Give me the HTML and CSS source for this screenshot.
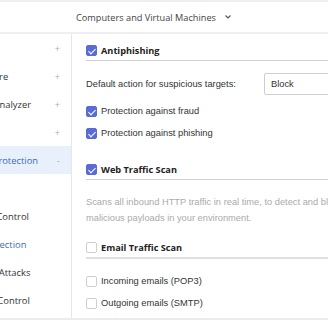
FILE: index.html
```html
<!DOCTYPE html>
<html lang="en">
<head>
  <meta charset="UTF-8" />
  <title>Policy - Network Protection</title>
  <link rel="stylesheet" href="styles.css">
</head>
<body>

  <header class="topbar">
    <span>Computers and Virtual Machines</span>
    <svg class="chevron" width="6" height="4" viewBox="0 0 6 4"><polyline points="0.5,0.5 3,3 5.5,0.5" fill="none" stroke="#555" stroke-width="1.1"/></svg>
  </header>

  <div class="layout">
    <nav class="sidebar">
      <ul class="nav">
        <li class="nav-item"><span class="nav-label">General</span><span class="nav-sign">+</span></li>
        <li class="nav-item"><span class="nav-label">Antimalware</span><span class="nav-sign">+</span></li>
        <li class="nav-item"><span class="nav-label">Sandbox Analyzer</span><span class="nav-sign">+</span></li>
        <li class="nav-item"><span class="nav-label">Firewall</span><span class="nav-sign">+</span></li>
        <li class="nav-item active"><span class="nav-label">Network Protection</span><span class="nav-sign">-</span></li>
        <li class="nav-item sub"><span class="nav-label">General</span></li>
        <li class="nav-item sub"><span class="nav-label">Content Control</span></li>
        <li class="nav-item sub current"><span class="nav-label">Web Protection</span></li>
        <li class="nav-item sub"><span class="nav-label">Network Attacks</span></li>
        <li class="nav-item tail"><span class="nav-label">Application Control</span></li>
      </ul>
    </nav>

    <main class="content">
      <section>
        <div class="section-head"><span class="check on"></span>Antiphishing</div>
        <div class="field">
          <span class="field-label">Default action for suspicious targets:</span>
          <div class="select">Block</div>
        </div>
        <div class="option first"><span class="check on"></span>Protection against fraud</div>
        <div class="option"><span class="check on"></span>Protection against phishing</div>
      </section>

      <section class="web-scan">
        <div class="section-head"><span class="check on"></span>Web Traffic Scan</div>
        <p class="desc">Scans all inbound HTTP traffic in real time, to detect and block malicious payloads in your environment.</p>
      </section>

      <section class="email-scan">
        <div class="section-head thick"><span class="check"></span>Email Traffic Scan</div>
        <div class="option first"><span class="check"></span>Incoming emails (POP3)</div>
        <div class="option"><span class="check"></span>Outgoing emails (SMTP)</div>
      </section>
    </main>
  </div>

</body>
</html>
```

FILE: styles.css
```css
* {
  box-sizing: border-box;
}

body {
  margin: 0;
  width: 328px;
  height: 320px;
  overflow: hidden;
  font-family: 'Liberation Sans', Arial, sans-serif;
  font-size: 9.3px;
  color: #333;
  background: #fff;
}

.topbar {
  height: 34px;
  border-top: 2px solid #efefef;
  border-bottom: 2px solid #efefef;
  display: flex;
  align-items: center;
  gap: 9px;
  padding-left: 76px;
  font-family: 'Open Sans', sans-serif;
  font-size: 9.2px;
  color: #444;
}

.layout {
  display: flex;
  height: 286px;
  border-bottom: 2px solid #ececec;
}

/* the tree is scrolled sideways, so labels start left of the frame */
.sidebar {
  width: 72px;
  flex: none;
  border-right: 1px solid #e6e6e6;
  overflow: hidden;
}

.nav {
  list-style: none;
  margin: 0;
  padding: 0;
}

.nav-item {
  display: flex;
  align-items: center;
  height: 28px;
  margin-left: -47px;
  padding-right: 11px;
  white-space: nowrap;
  font-family: 'Open Sans', sans-serif;
  font-size: 9.4px;
  color: #333;
}

.nav-item.sub {
  margin-left: -41px;
}

.nav-item.tail {
  margin-left: -54px;
}

.nav-label {
  flex: 1;
}

.nav-sign {
  color: #aaa;
  font-size: 9px;
}

.nav-item.active {
  background: #e8f1fb;
  color: #3e6cb8;
}

.nav-item.current {
  color: #3e6cb8;
}

.content {
  flex: none;
  width: 420px;
  padding: 6px 0 0 14px;
}

.section-head {
  display: flex;
  align-items: center;
  gap: 4px;
  height: 21px;
  border-bottom: 1px solid #cfcfcf;
  font-family: 'Open Sans', sans-serif;
  font-weight: 700;
  font-size: 9.2px;
  color: #222;
}

.section-head.thick {
  height: 22px;
  border-bottom: 2px solid #e0e0e0;
}

.check {
  position: relative;
  flex: none;
  width: 11px;
  height: 11px;
  border: 1px solid #cfcfcf;
  border-radius: 2px;
  background: #fff;
}

.check.on {
  background: #5b6bd6;
  border-color: #5b6bd6;
}

.check.on::after {
  content: "";
  position: absolute;
  left: 3px;
  top: 1px;
  width: 3px;
  height: 6px;
  border: solid #fff;
  border-width: 0 1.5px 1.5px 0;
  transform: rotate(45deg);
}

.field {
  display: flex;
  align-items: center;
  height: 22px;
  margin-top: 12px;
}

.field-label {
  width: 178px;
  flex: none;
}

.select {
  width: 120px;
  height: 22px;
  display: flex;
  align-items: center;
  padding-left: 6px;
  border: 1px solid #cfcfcf;
  border-radius: 2px;
}

.option {
  display: flex;
  align-items: center;
  gap: 4px;
  height: 22px;
}

.option.first {
  margin-top: 5px;
}

.email-scan .option.first {
  margin-top: 11px;
}

.web-scan {
  margin-top: 15px;
}

.email-scan {
  margin-top: 11px;
}

.desc {
  width: 270px;
  margin: 14px 0 0;
  line-height: 16px;
  color: #aaa;
}
```
